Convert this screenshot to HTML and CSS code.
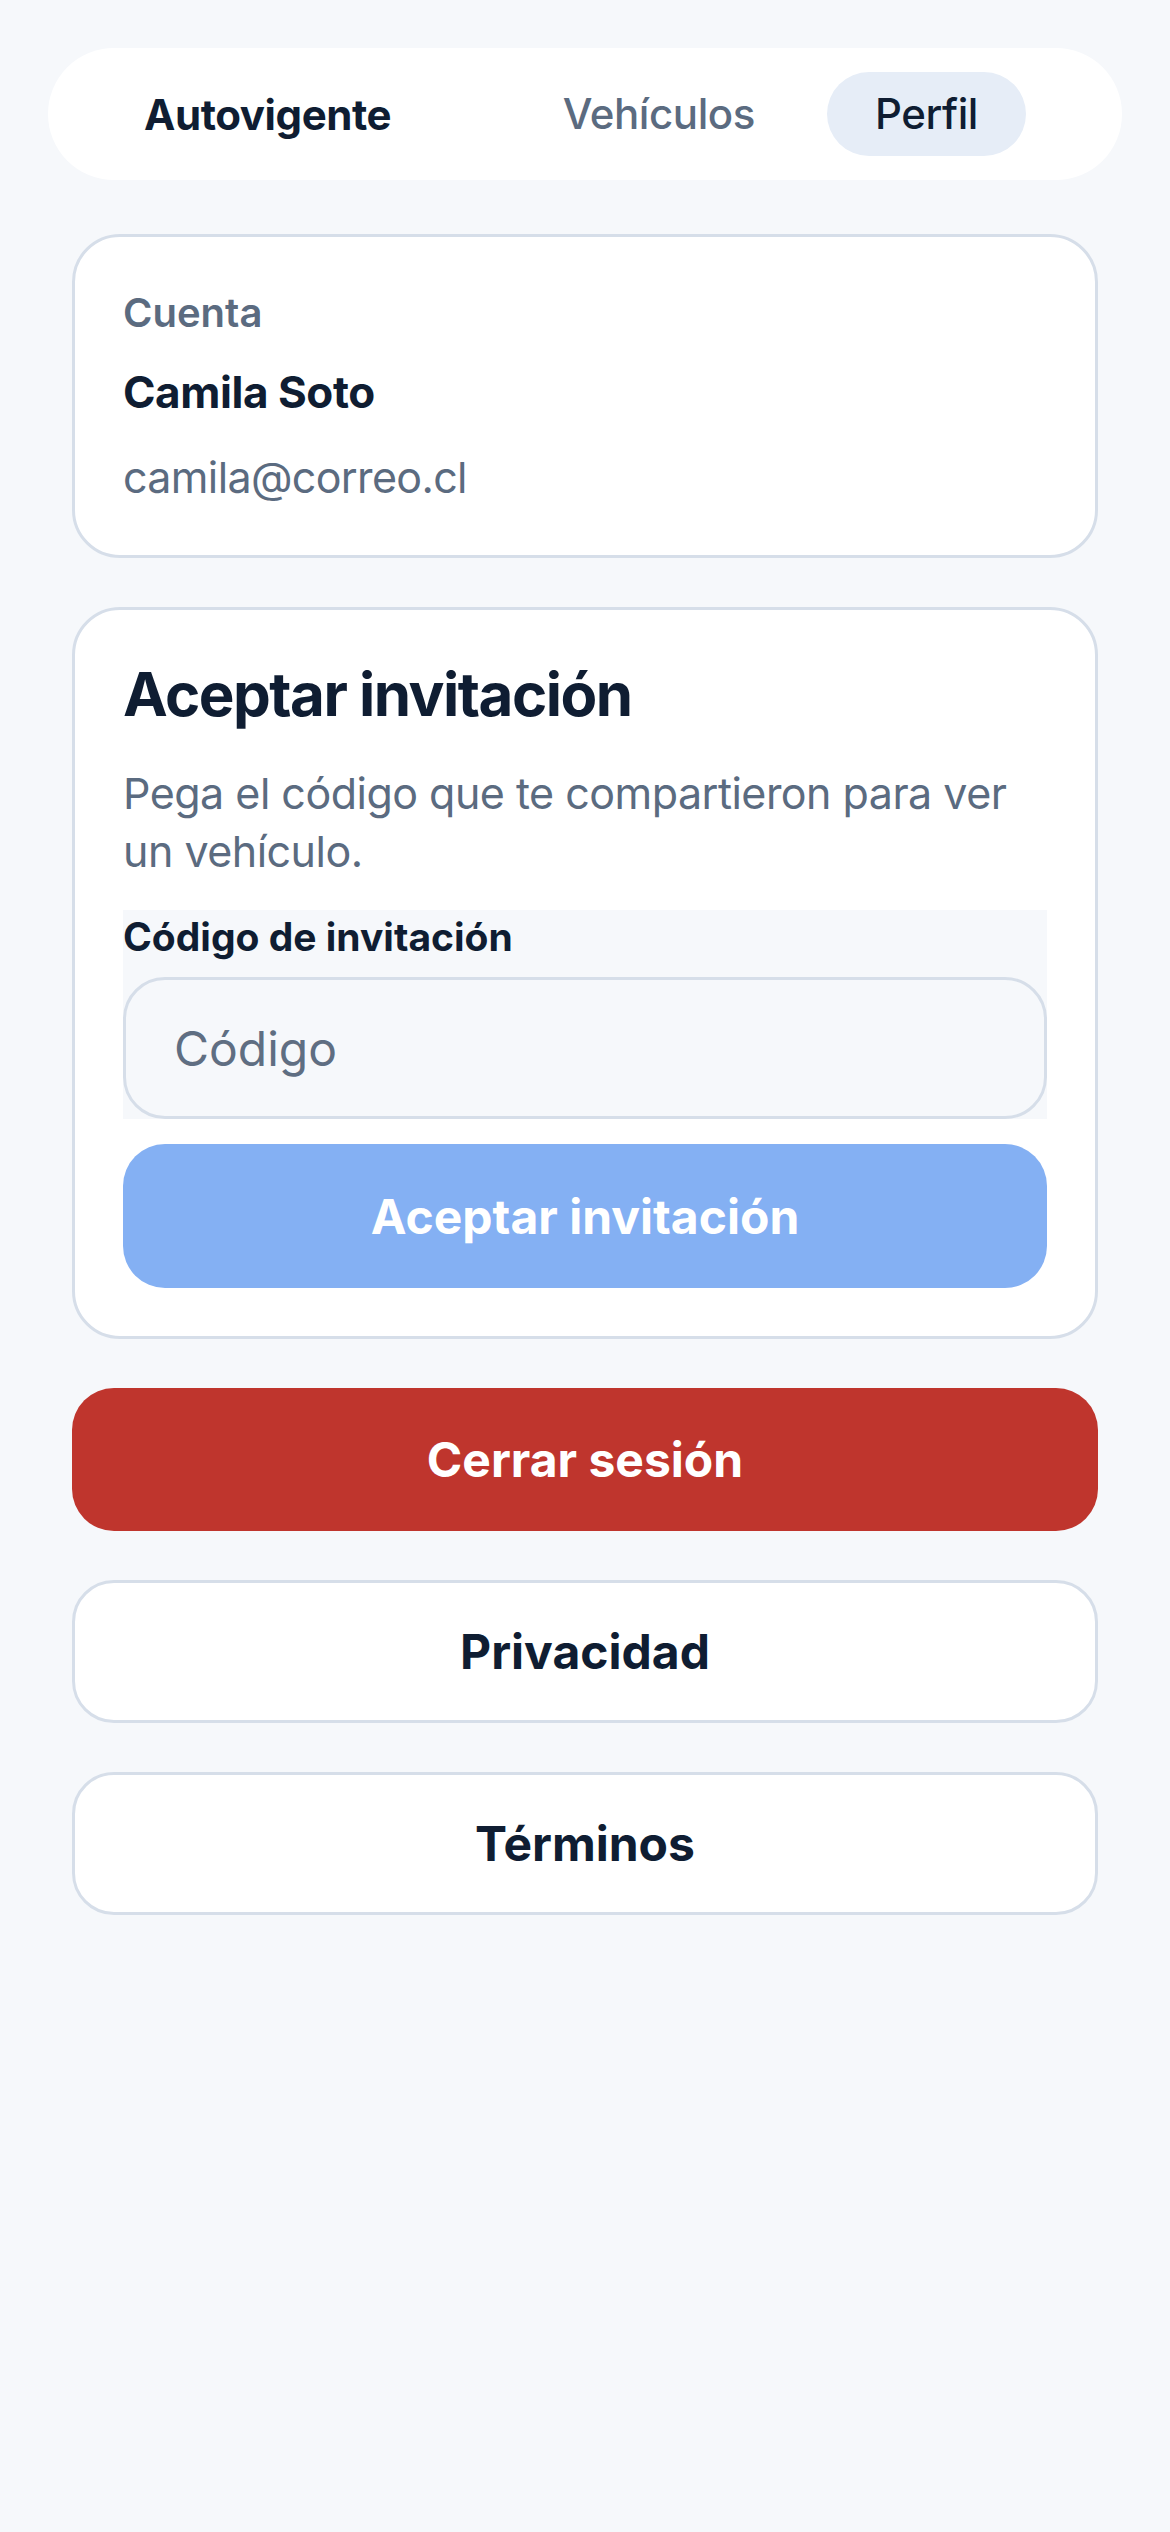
FILE: index.html
```html
<!DOCTYPE html>
<html lang="es">
<head>
  <meta charset="UTF-8" />
  <meta name="viewport" content="width=device-width, initial-scale=1.0"/>
  <title>Perfil - Autovigente</title>
  <link rel="stylesheet" href="styles.css">
</head>
<body>
  <div class="page">
    <nav class="topbar">
      <a class="brand" href="/">Autovigente</a>
      <a class="tab" href="/vehiculos">Vehículos</a>
      <a class="tab active" href="/perfil">Perfil</a>
    </nav>

    <main class="content">
      <section class="card account">
        <div class="account-label">Cuenta</div>
        <div class="account-name">Camila Soto</div>
        <div class="account-email">camila@correo.cl</div>
      </section>

      <section class="card invite">
        <h2>Aceptar invitación</h2>
        <p>Pega el código que te compartieron para ver un vehículo.</p>
        <label class="field">
          <span class="field-label">Código de invitación</span>
          <input type="text" placeholder="Código" />
        </label>
        <button class="btn btn-primary" disabled>Aceptar invitación</button>
      </section>

      <button class="btn btn-danger" onclick="logout()">Cerrar sesión</button>
      <a class="btn btn-outline" href="/privacidad">Privacidad</a>
      <a class="btn btn-outline" href="/terminos">Términos</a>
    </main>
  </div>

  <script>
    function logout() {
      localStorage.removeItem("token");
      window.location = "/login";
    }
  </script>
</body>
</html>
```

FILE: styles.css
```css
body { margin: 0; background: #f6f8fb; font-family: Inter, "Noto Sans", sans-serif; color: #0f1d32; }
a { text-decoration: none; color: inherit; }
.page { padding: 48px 48px; }

.topbar { display: flex; align-items: center; height: 132px; padding: 0 96px 0 48px; background: #fff; border-radius: 66px; }
.brand { padding: 0 48px; margin-right: auto; font-size: 42px; font-weight: 700; letter-spacing: -0.01em; }
.tab { height: 84px; line-height: 84px; padding: 0 48px; border-radius: 42px; font-size: 42px; font-weight: 500; color: #5b6b80; letter-spacing: -0.01em; }
.tab + .tab { margin-left: 24px; }
.tab.active { background: #e6edf7; color: #0f1d32; }

.content { display: flex; flex-direction: column; gap: 49px; padding: 54px 24px 0; }
.card { background: #fff; border: 3px solid #d6dee9; border-radius: 48px; padding: 48px; }

.account { padding-top: 52px; padding-bottom: 47px; }
.account-label { font-size: 40px; line-height: 48px; font-weight: 600; color: #5b6b80; }
.account-name { margin-top: 24px; font-size: 44px; line-height: 62px; font-weight: 700; letter-spacing: -0.01em; }
.account-email { margin-top: 23px; font-size: 43px; line-height: 62px; color: #5b6b80; letter-spacing: -0.015em; }

.invite h2 { margin: 0; font-size: 60px; line-height: 72px; font-weight: 700; letter-spacing: -0.025em; }
.invite p { margin: 34px 0 0; font-size: 43px; line-height: 58px; color: #5b6b80; letter-spacing: -0.012em; }
.field { display: block; margin-top: 30px; background: #f6f8fb; }
.field-label { display: block; font-size: 39px; line-height: 53px; font-weight: 700; margin-bottom: 14px; }
.field input { display: block; width: 100%; box-sizing: border-box; height: 142px; padding: 0 48px; border: 3px solid #d6dee9; border-radius: 42px; background: #f6f8fb; font-family: inherit; font-size: 48px; color: #0f1d32; }
.field input::placeholder { color: #5f6e82; }

.btn { display: flex; align-items: center; justify-content: center; box-sizing: border-box; width: 100%; height: 143px; border: none; border-radius: 42px; font-family: inherit; font-size: 48px; font-weight: 700; cursor: pointer; }
.btn-primary { margin-top: 25px; height: 144px; background: #84b0f3; color: #fff; }
.btn-danger { background: #bf352d; color: #fff; }
.btn-outline { height: 143px; background: #fff; border: 3px solid #d6dee9; color: #0f1d32; }
```
